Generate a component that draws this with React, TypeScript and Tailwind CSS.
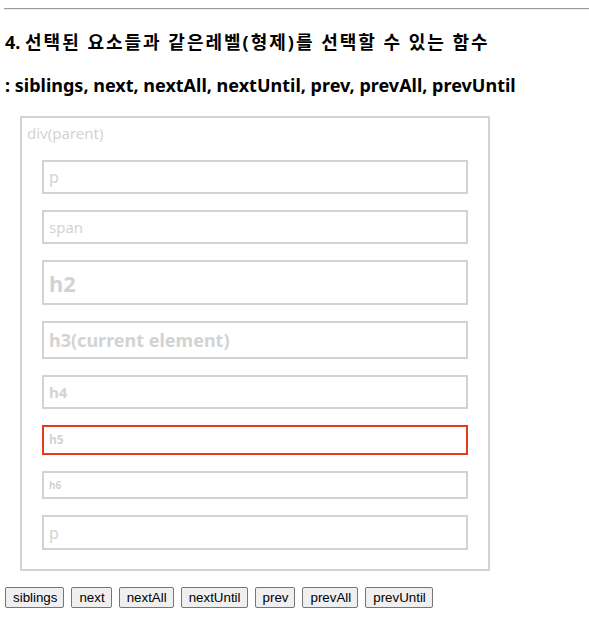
import React from "react";

const boxes: { label: string; h: string; text: string; red?: boolean }[] = [
  { label: "p", h: "h-[34px]", text: "text-[16px] font-normal" },
  { label: "span", h: "h-[34px]", text: "text-[15px] font-normal" },
  { label: "h2", h: "h-[45px]", text: "text-[22px] font-bold" },
  { label: "h3(current element)", h: "h-[38px]", text: "text-[18px] font-bold" },
  { label: "h4", h: "h-[34px]", text: "text-[15px] font-bold" },
  { label: "h5", h: "h-[30px]", text: "text-[12px] font-bold", red: true },
  { label: "h6", h: "h-[28px]", text: "text-[10px] font-bold" },
  { label: "p", h: "h-[35px]", text: "text-[16px] font-normal" },
];

const buttons = ["siblings", "next", "nextAll", "nextUntil", "prev", "prevAll", "prevUntil"];

export default function App() {
  return (
    <div className="min-h-[625px] w-[589px] bg-white pt-2 font-['Noto_Sans','Noto_Sans_CJK_KR',sans-serif] text-black">
      <hr className="ml-1 h-0 border-t border-b border-t-[#9a9a9a] border-b-[#eeeeee]" />

      <h3 className="mt-5 ml-[5px] text-[18px] leading-6 font-bold">
        4. <span className="tracking-[2px]">선택된 요소들과 같은레벨(형제)를 선택할 수 있는 함수</span>
      </h3>
      <h3 className="mt-[19px] ml-[5px] text-[18px] leading-6 font-bold">
        : siblings, next, nextAll, nextUntil, prev, prevAll, prevUntil
      </h3>

      {/* parent */}
      <div className="mt-[19px] ml-5 w-[470px] border-2 border-[#d3d3d3] pt-[5px] pb-[19px] text-[#d3d3d3]">
        <div className="px-[5px] text-[15px] leading-5">div(parent)</div>
        <div className="mx-5 mt-[17px] flex flex-col gap-4">
          {boxes.map((b, i) => (
            <div
              key={i}
              className={`${b.h} flex items-center border-2 px-[5px] leading-none ${b.text} ${
                b.red ? "border-[#e53b1c]" : "border-[#d3d3d3]"
              }`}
            >
              {b.label}
            </div>
          ))}
        </div>
      </div>

      <div className="mt-[16px] ml-[5px] flex gap-[7px]">
        {buttons.map((b) => (
          <button
            key={b}
            className="h-[21px] rounded-[2px] border border-[#767676] bg-[#efefef] pr-[6px] pl-[7px] font-['Liberation_Sans',Arial,sans-serif] text-[13.33px] leading-none text-black"
          >
            {b}
          </button>
        ))}
      </div>
    </div>
  );
}
